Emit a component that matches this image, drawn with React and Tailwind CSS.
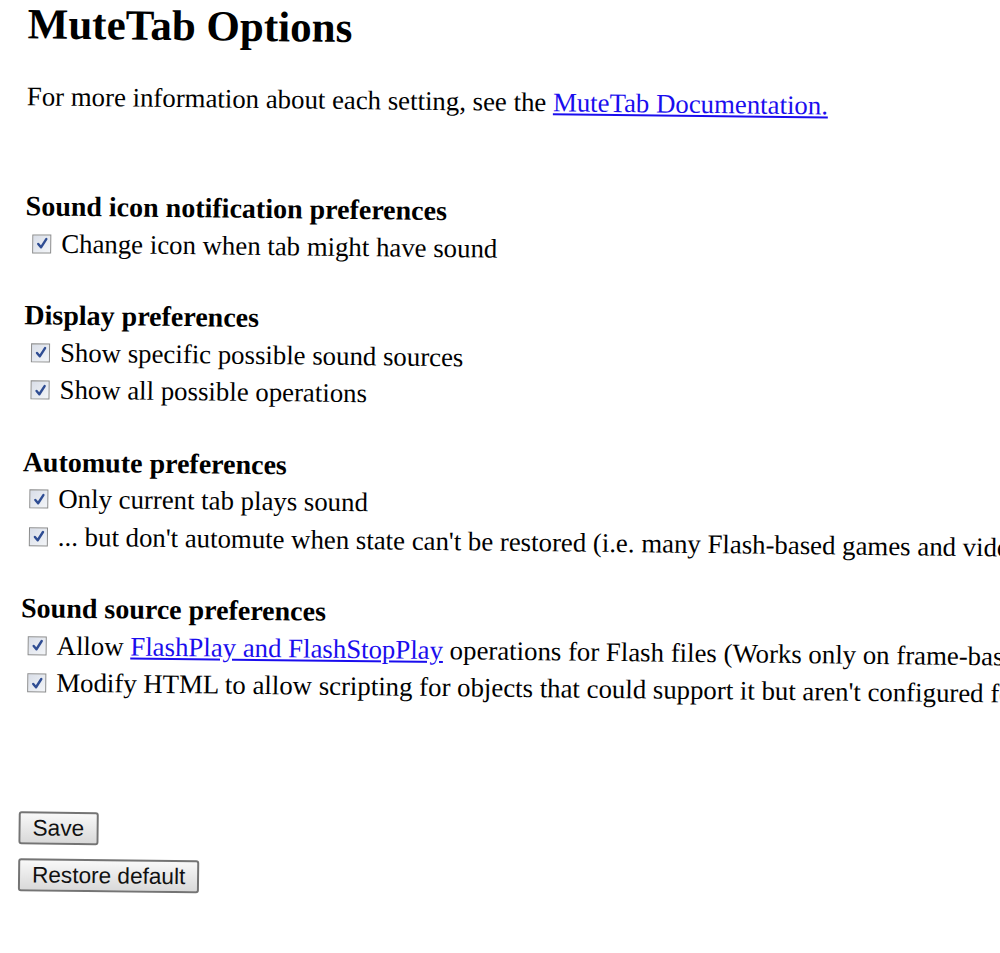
import React from "react";

const serif = { fontFamily: '"Liberation Serif", "Times New Roman", serif' };

function Box() {
  return (
    <span className="inline-flex shrink-0 w-[19px] h-[19px] ml-[7px] mr-[10px] border border-[#8a8b8c] bg-gradient-to-br from-[#d9dee8] to-[#f3f5f8] items-center justify-center self-center">
      <svg width="14" height="14" viewBox="0 0 14 14">
        <path d="M3 7.5 L5.8 10.8 L11 2.5" fill="none" stroke="#2f4d93" strokeWidth="2.4" strokeLinecap="round" strokeLinejoin="round" />
      </svg>
    </span>
  );
}

function Row({ children }) {
  return (
    <div className="flex items-center whitespace-nowrap h-[37.5px] text-[26.8px] leading-[37.5px]">
      <Box />
      <span>{children}</span>
    </div>
  );
}

function Heading({ children }) {
  return <div className="font-bold text-[28px] leading-[37.5px] whitespace-nowrap">{children}</div>;
}

function Section({ title, children }) {
  return (
    <div className="mb-[34px]">
      <Heading>{title}</Heading>
      {children}
    </div>
  );
}

const Link = ({ children }) => (
  <a href="#" className="text-[#1a0dee] underline">{children}</a>
);

function Btn({ children }) {
  return (
    <button
      className="block h-[33px] px-[12px] rounded-[3px] border-2 border-[#747474] bg-gradient-to-b from-[#f8f8f8] to-[#d9d9d9] text-[22.6px] leading-[29px] text-[#111]"
      style={{ fontFamily: '"Liberation Sans", Arial, sans-serif' }}
    >
      {children}
    </button>
  );
}

export default function App() {
  return (
    <div className="w-[1000px] h-[953px] overflow-hidden bg-white">
      <div className="origin-top-left rotate-[0.65deg] pl-[28px] text-black" style={serif}>
        <h1 className="font-bold text-[43px] leading-[48px] whitespace-nowrap">MuteTab Options</h1>
        <p className="mt-[33px] text-[26.8px] leading-[30px] whitespace-nowrap">
          For more information about each setting, see the <Link>MuteTab Documentation.</Link>
        </p>
        <div className="mt-[76px]">
          <Section title="Sound icon notification preferences">
            <Row>Change icon when tab might have sound</Row>
          </Section>
          <Section title="Display preferences">
            <Row>Show specific possible sound sources</Row>
            <Row>Show all possible operations</Row>
          </Section>
          <Section title="Automute preferences">
            <Row>Only current tab plays sound</Row>
            <Row>... but don't automute when state can't be restored (i.e. many Flash-based games and videos)</Row>
          </Section>
          <div>
            <Heading>Sound source preferences</Heading>
            <Row>
              Allow <Link>FlashPlay and FlashStopPlay</Link> operations for Flash files (Works only on frame-based animations)
            </Row>
            <Row>Modify HTML to allow scripting for objects that could support it but aren't configured for it</Row>
          </div>
        </div>
        <div className="mt-[109px] flex flex-col items-start gap-[14px]">
          <Btn>Save</Btn>
          <Btn>Restore default</Btn>
        </div>
      </div>
    </div>
  );
}
